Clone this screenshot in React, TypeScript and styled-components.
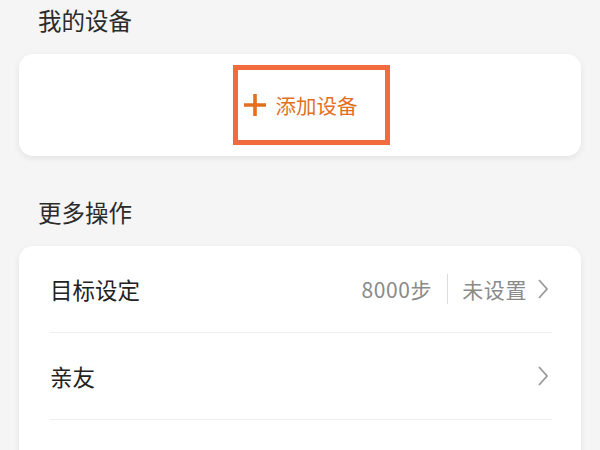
import React from 'react';
import styled, { createGlobalStyle } from 'styled-components';

const GlobalStyle = createGlobalStyle`
  html, body {
    margin: 0;
    padding: 0;
    background: #f5f5f5;
    font-family: "Noto Sans CJK SC", "Noto Sans", sans-serif;
  }
`;

const Page = styled.div`
  width: 600px;
  height: 450px;
  overflow: hidden;
  padding: 4px 19px 0;
  box-sizing: border-box;
  background: #f5f5f5;
`;

const Section = styled.section<{ $top?: number }>`
  margin-top: ${({ $top }) => $top ?? 0}px;
`;

const SectionTitle = styled.h2`
  margin: 0 0 18px;
  padding-left: 19px;
  height: 32px;
  line-height: 32px;
  font-size: 23.5px;
  font-weight: 400;
  color: #2b2b2b;
`;

const Card = styled.div`
  background: #fff;
  border-radius: 14px;
  box-shadow: 0 2px 6px rgba(0, 0, 0, 0.08);
`;

const DeviceCard = styled(Card)`
  height: 102px;
  display: flex;
  align-items: center;
  justify-content: center;
`;

const AddButton = styled.div`
  position: relative;
  display: flex;
  align-items: center;
  gap: 9px;
  color: #e2701f;
  font-size: 20.5px;
  font-weight: 400;
`;

const Highlight = styled.div`
  position: absolute;
  left: -10px;
  right: -32px;
  top: 50%;
  height: 80px;
  transform: translateY(-50%);
  border: 5px solid #f26b3d;
  box-sizing: border-box;
`;

const ListCard = styled(Card)`
  height: 240px;
  border-radius: 14px 14px 0 0;
`;

const Row = styled.div`
  height: 87px;
  margin: 0 29px 0 31px;
  display: flex;
  align-items: center;
  border-bottom: 1px solid #efefef;
  box-sizing: border-box;
`;

const Label = styled.span`
  flex: 1;
  font-size: 22.5px;
  color: #222;
`;

const Value = styled.span`
  font-size: 21px;
  color: #8a8a8a;
  letter-spacing: 0.6px;
`;

const Divider = styled.span`
  width: 1px;
  height: 30px;
  background: #dcdcdc;
  margin: 0 14px 0 15px;
`;

const Chevron = () => (
  <svg width="14" height="22" viewBox="0 0 14 22" style={{ marginLeft: 9, marginRight: 2 }}>
    <path d="M3 2 L11 11 L3 20" fill="none" stroke="#9a9a9a" strokeWidth="1.8" />
  </svg>
);

const Plus = () => (
  <svg width="24" height="24" viewBox="0 0 24 24">
    <path d="M12 1 V23 M1 12 H23" stroke="#e2701f" strokeWidth="3.6" />
  </svg>
);

const App: React.FC = () => {
  return (
    <>
      <GlobalStyle />
      <Page>
        <Section>
          <SectionTitle>我的设备</SectionTitle>
          <DeviceCard>
            <AddButton>
              <Plus />
              添加设备
              <Highlight />
            </AddButton>
          </DeviceCard>
        </Section>

        <Section $top={40}>
          <SectionTitle>更多操作</SectionTitle>
          <ListCard>
            <Row>
              <Label>目标设定</Label>
              <Value>8000步</Value>
              <Divider />
              <Value>未设置</Value>
              <Chevron />
            </Row>
            <Row>
              <Label>亲友</Label>
              <Chevron />
            </Row>
          </ListCard>
        </Section>
      </Page>
    </>
  );
};

export default App;
